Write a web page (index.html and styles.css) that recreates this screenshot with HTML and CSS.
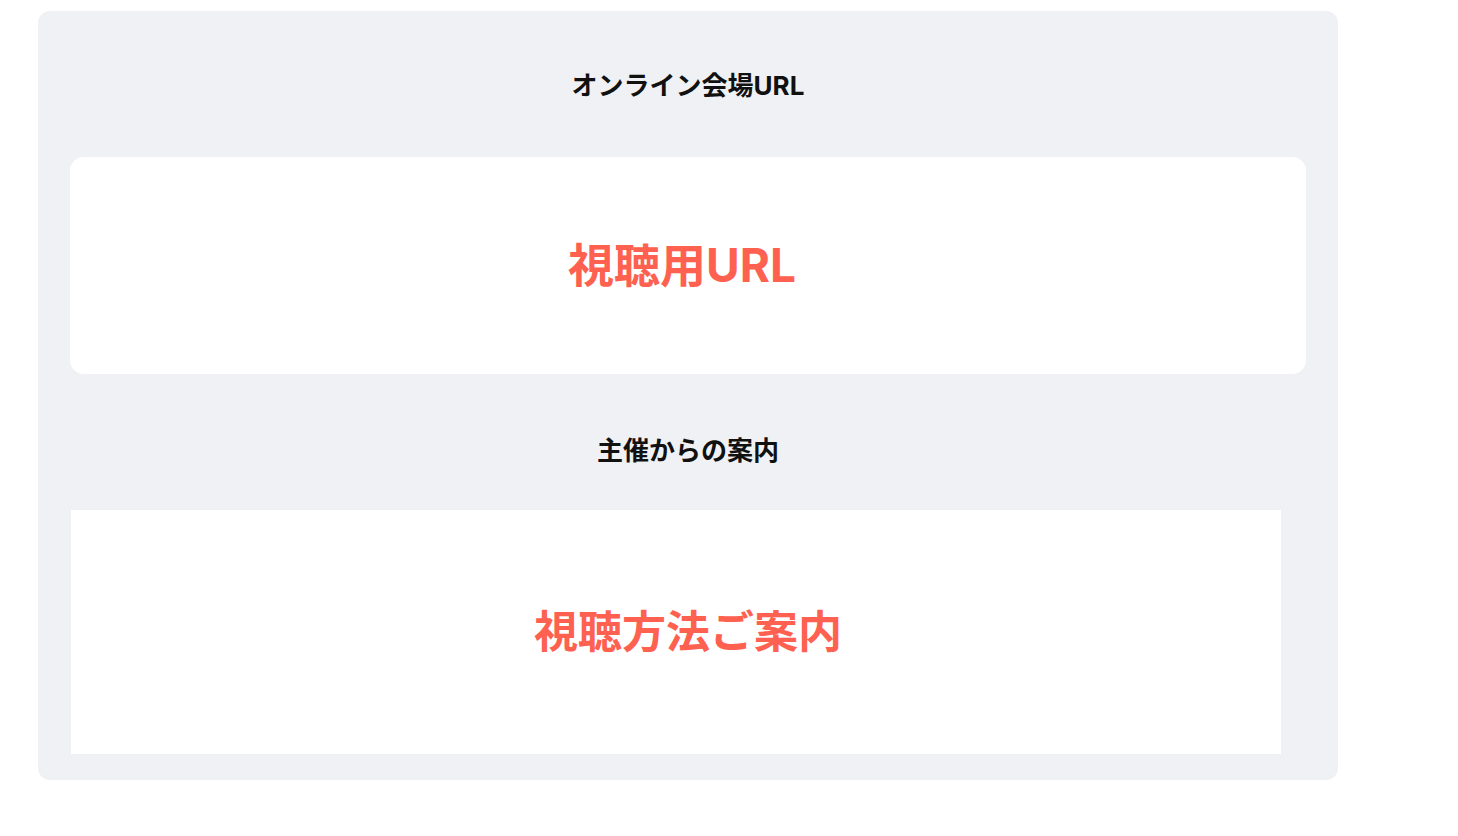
FILE: index.html
```html
<!DOCTYPE html>
<html lang="ja">
<head>
<meta charset="utf-8">
<title>オンライン会場URL</title>
<link rel="stylesheet" href="styles.css">
</head>
<body>
<section class="panel">
  <h2 class="heading heading-first">オンライン会場URL</h2>
  <a class="url-card" href="#">視聴用URL</a>
  <h2 class="heading heading-second">主催からの案内</h2>
  <div class="guide">
    <div class="guide-banner">視聴方法ご案内</div>
  </div>
</section>
</body>
</html>
```
FILE: styles.css
```css
html, body {
  margin: 0;
  padding: 0;
  background: #ffffff;
}
body {
  font-family: Inter, "Noto Sans CJK JP", sans-serif;
  color: #111111;
}
.panel {
  box-sizing: border-box;
  width: 1300px;
  margin: 11px 0 0 38px;
  padding: 54px 32px 26px;
  background: #f0f1f5;
  border-radius: 12px;
  display: flex;
  flex-direction: column;
}
.heading {
  margin: 0;
  height: 40px;
  line-height: 42px;
  font-size: 26px;
  font-weight: 700;
  text-align: center;
  color: #111111;
}
.heading-first {
  margin-bottom: 52px;
}
.heading-second {
  margin-top: 56px;
  margin-bottom: 40px;
}
.url-card {
  display: flex;
  align-items: center;
  justify-content: center;
  height: 217px;
  background: #ffffff;
  border-radius: 14px;
  color: #ff6150;
  font-size: 46px;
  font-weight: 700;
  text-decoration: none;
  padding-bottom: 8px;
  box-sizing: border-box;
  padding-right: 12px;
}
.guide {
  padding-left: 1px;
  display: flex;
}
.guide-banner {
  width: 1210px;
  height: 244px;
  background: #ffffff;
  display: flex;
  align-items: center;
  justify-content: center;
  color: #ff6150;
  font-size: 44px;
  font-weight: 700;
  padding-left: 24px;
  padding-bottom: 6px;
  box-sizing: border-box;
}
```
